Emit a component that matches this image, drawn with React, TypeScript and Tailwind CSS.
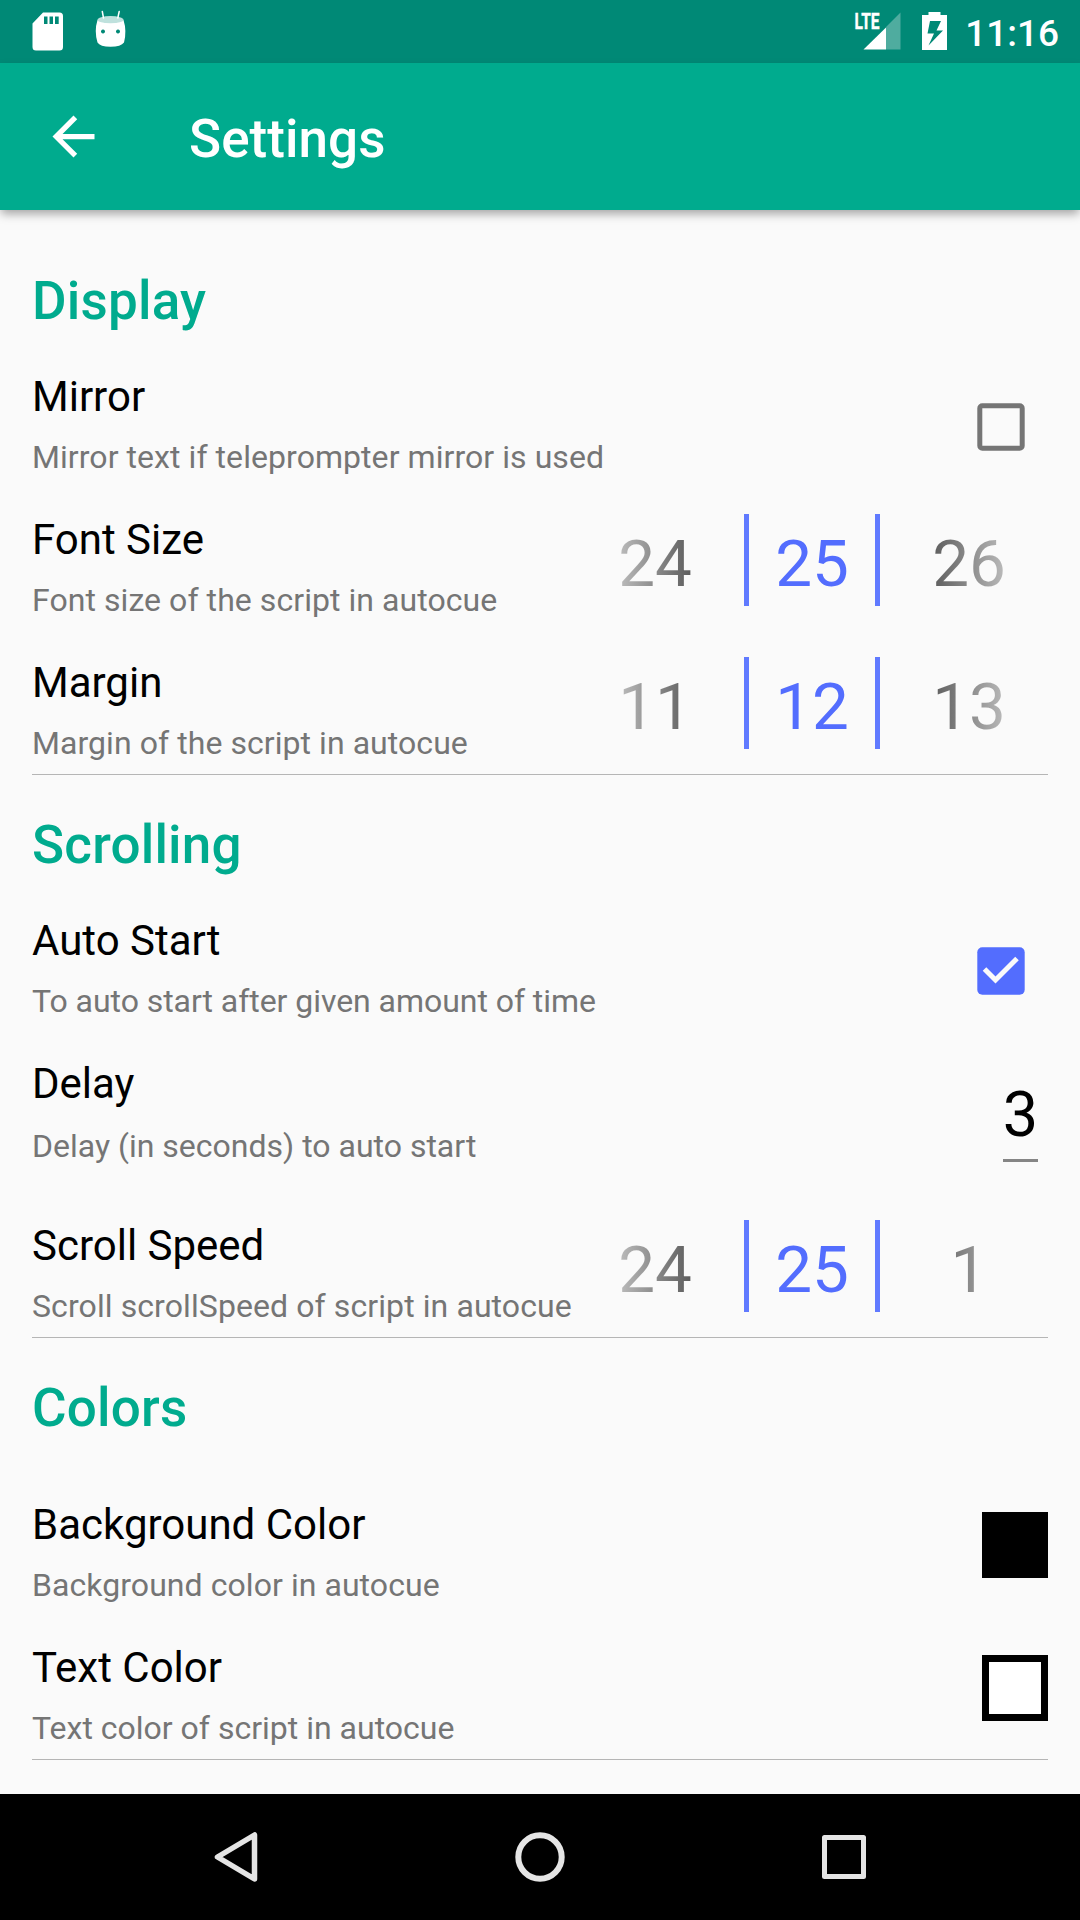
import React from "react";

function StatusBar() {
  return (
    <div className="flex h-[63px] items-center justify-between bg-[#008976] text-white">
      <svg className="h-[63px] w-[140px]" viewBox="0 0 140 63" fill="none">
        <path
          fill="#fff"
          fillRule="evenodd"
          d="M43 12.500H59.500Q63 12.500 63 16V47Q63 50.500 59.500 50.500H36Q32.500 50.500 32.500 47V23.500ZM44 16.500V24H47.500V16.500ZM49.500 16.500V24H53V16.500ZM55 16.500V24H58.700V16.500Z"
        />
        <path fill="#fff" fillRule="evenodd" d="M97.500 20Q110.500 26 123.500 20Q127 31 124 42.500Q121 46.700 110.500 46.700Q100 46.700 97.500 42.500Q94 31 97.500 20ZM103 29.500a2 2 0 1 0 .01 0ZM118 29.500a2 2 0 1 0 .01 0Z" />
        <ellipse cx="110.500" cy="19.700" rx="13" ry="3.600" fill="#bfe1dd" />
        <path stroke="#fff" strokeWidth="1.500" strokeLinecap="round" d="M102.300 11.500L103.500 18M119.200 11.500L117.800 18" />
      </svg>
      <div className="flex items-center">
        <svg className="h-[63px] w-[110px]" viewBox="850 0 110 63">
          <text x="854.500" y="29.200" fontFamily="Roboto" fontWeight="700" fontSize="22.500" textLength="25" lengthAdjust="spacingAndGlyphs" fill="#fff" stroke="#fff" strokeWidth=".4">
            LTE
          </text>
          <path fill="#4fac9f" d="M900.500 12.500V49.500H886V27Z" />
          <path fill="#fff" d="M886 27.500V49.500H863.500Z" />
          <path fill="#fff" fillRule="evenodd" d="M928.500 12H940.500V15H947V50H922V15H928.500ZM930 21L927.500 33.500H934L928.500 45.500L943 30.500H936.500L941 21Z" />
        </svg>
        <span className="mr-[21px] w-[99px] pt-1 text-right text-[37px] leading-[63px] font-medium">11:16</span>
      </div>
    </div>
  );
}

function AppBar() {
  return (
    <header className="relative z-10 flex h-[147px] items-center bg-[#00ab8e] text-white shadow-[0_5px_9px_-1px_rgba(0,0,0,0.34)]">
      <svg className="ml-[42px] size-[63px]" viewBox="0 0 24 24" fill="#fff">
        <path d="M20 11H7.830l5.590-5.590L12 4l-8 8 8 8 1.410-1.410L7.830 13H20v-2z" />
      </svg>
      <h1 className="ml-[84px] pt-[5px] text-[53px] leading-[60px] font-medium tracking-[0.05px]">Settings</h1>
    </header>
  );
}

function Heading({ children }: { children: React.ReactNode }) {
  return (
    <h2 className="mt-10 text-[53px] leading-[60px] font-medium tracking-[0.2px] text-[#00ab8e]">{children}</h2>
  );
}

interface RowProps {
  title: string;
  detail: string;
  className?: string;
  textTop?: string;
  gap?: string;
  tracking?: string;
  children: React.ReactNode;
}

function Row({
  title,
  detail,
  className = "h-[143px]",
  textTop = "pt-[21px]",
  gap = "mt-4",
  tracking = "tracking-[0.06px]",
  children,
}: RowProps) {
  return (
    <div className={`flex items-start justify-between ${className}`}>
      <div className={`whitespace-nowrap ${textTop}`}>
        <div className="text-[42px] leading-[50px] text-black">{title}</div>
        <div className={`text-[32px] leading-[38px] text-[#757575] ${gap} ${tracking}`}>{detail}</div>
      </div>
      {children}
    </div>
  );
}

function Picker({ values }: { values: [string, string, string] }) {
  return (
    <div className="mt-5 -ml-20 flex h-[92px] items-start pr-px text-[65.6px] leading-[99px] text-[#536dfe]">
      <div className="flex w-[167px] justify-center pr-[11px]">
        <span className="bg-linear-to-r from-[#bdbdbd] to-[#5c5c5c] bg-clip-text text-transparent">{values[0]}</span>
      </div>
      <div className="flex h-[92px] w-[136px] justify-center border-x-[5px] border-[#607aff]">{values[1]}</div>
      <div className="flex w-[167px] justify-center pl-[11px]">
        <span className="w-[76px] bg-linear-to-r from-[#5c5c5c] to-[#bdbdbd] bg-clip-text text-center text-transparent">{values[2]}</span>
      </div>
    </div>
  );
}

function Checkbox({ checked = false }: { checked?: boolean }) {
  return (
    <svg className="mt-[52px] mr-[23px] size-12" viewBox="0 0 48 48">
      {checked ? (
        <>
          <rect x=".3" y=".3" width="47.400" height="47.400" rx="5" fill="#536dfe" />
          <path d="M7.500 22L18.500 33L40 11.500" fill="none" stroke="#fafafa" strokeWidth="5" />
        </>
      ) : (
        <rect x="2.800" y="2.800" width="42.400" height="42.400" rx="2.500" fill="none" stroke="#757575" strokeWidth="5" />
      )}
    </svg>
  );
}

const last = "h-[137px]";
const Divider = () => <div className="h-px bg-[#b5b5b5]" />;

export default function App() {
  return (
    <div className="flex h-[1920px] w-[1080px] flex-col overflow-hidden bg-[#fafafa] font-['Roboto',sans-serif]">
      <StatusBar />
      <AppBar />
      <main className="flex-1 px-8 pt-[21px]">
        <section>
          <Heading>Display</Heading>
          <div className="mt-5">
            <Row title="Mirror" detail="Mirror text if teleprompter mirror is used">
              <Checkbox />
            </Row>
            <Row title="Font Size" detail="Font size of the script in autocue">
              <Picker values={["24", "25", "26"]} />
            </Row>
            <Row title="Margin" detail="Margin of the script in autocue" className={last}>
              <Picker values={["11", "12", "13"]} />
            </Row>
          </div>
          <Divider />
        </section>
        <section>
          <Heading>Scrolling</Heading>
          <div className="mt-5">
            <Row title="Auto Start" detail="To auto start after given amount of time" tracking="tracking-[-0.05px]">
              <Checkbox checked />
            </Row>
            <Row title="Delay" detail="Delay (in seconds) to auto start" className="h-[162px]" gap="mt-[18px]" tracking="tracking-normal">
              <div className="mt-[34px] mr-[10px] flex h-[90px] w-[35px] justify-center border-b-[3px] border-[#858585] text-[63px] leading-[86px] text-black">
                3
              </div>
            </Row>
            <Row title="Scroll Speed" detail="Scroll scrollSpeed of script in autocue" className={last} tracking="tracking-[0.09px]">
              <Picker values={["24", "25", "1"]} />
            </Row>
          </div>
          <Divider />
        </section>
        <section>
          <Heading>Colors</Heading>
          <div className="mt-[42px]">
            <Row title="Background Color" detail="Background color in autocue" textTop="pt-5">
              <div className="mt-8 size-[66px] bg-black" />
            </Row>
            <Row title="Text Color" detail="Text color of script in autocue" textTop="pt-5" className="h-[136px]" tracking="tracking-normal">
              <div className="mt-8 size-[66px] border-[7px] border-black bg-white" />
            </Row>
          </div>
          <Divider />
        </section>
      </main>
      <nav className="flex h-[126px] items-center bg-black">
        <svg className="h-[126px] w-full" viewBox="0 0 1080 126" fill="none" stroke="#e5e5e5" strokeLinejoin="round">
          <path d="M254.500 41V85L217.500 63Z" strokeWidth="5.500" />
          <circle cx="540" cy="63" r="21.700" strokeWidth="6" />
          <rect x="824.500" y="43.500" width="39" height="39" strokeWidth="5" />
        </svg>
      </nav>
    </div>
  );
}
